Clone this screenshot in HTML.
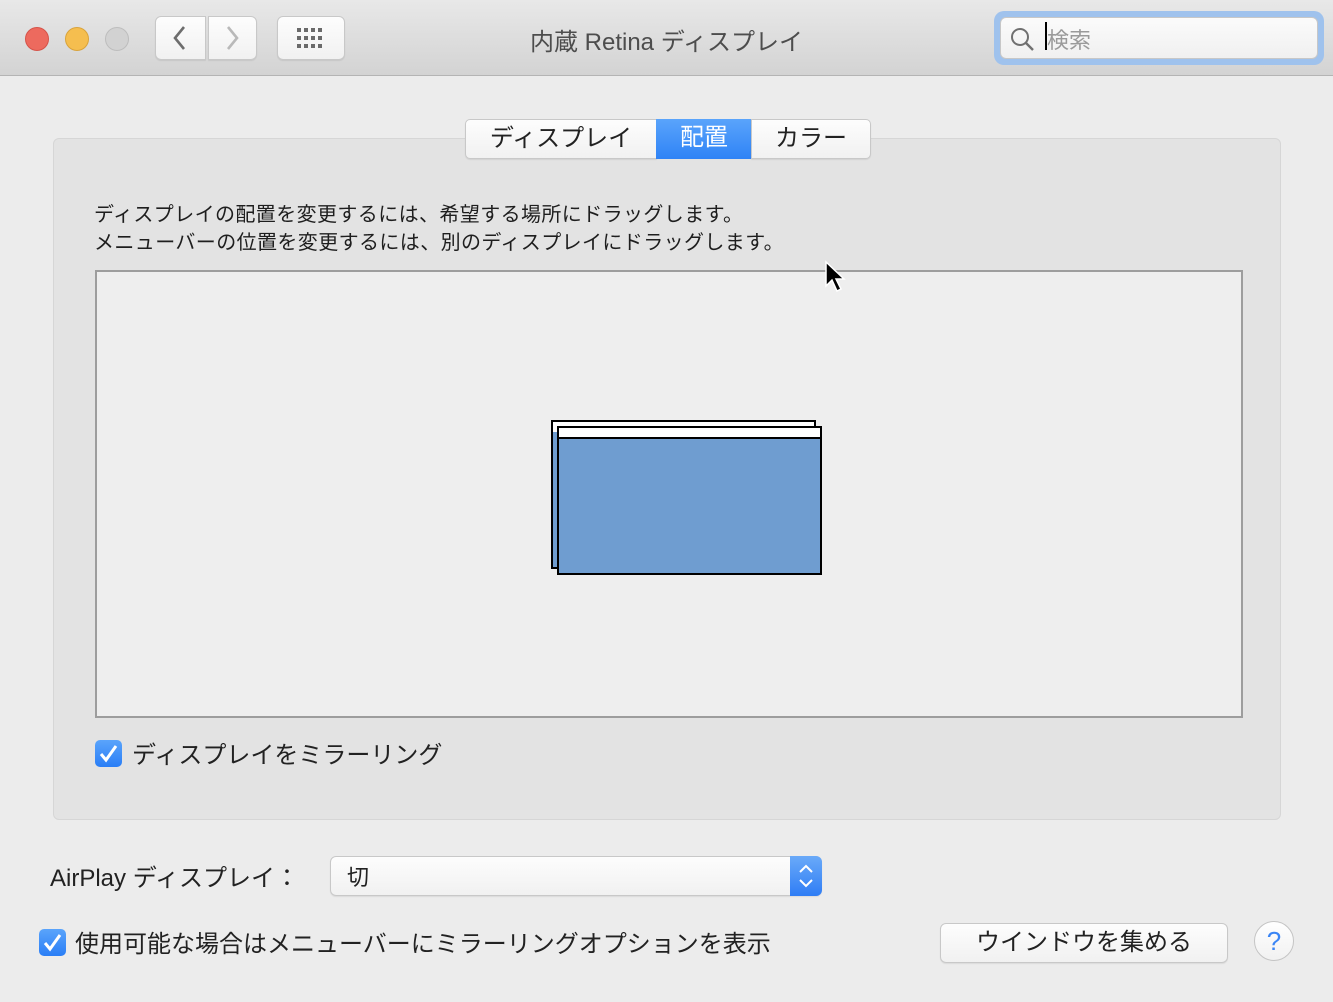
<!DOCTYPE html>
<html><head><meta charset="utf-8"><style>
*{box-sizing:border-box;margin:0;padding:0}
body{width:1333px;height:1002px;background:#ececec;font-family:"Liberation Sans","Noto Sans CJK JP",sans-serif;position:relative;overflow:hidden;color:#222}
.abs{position:absolute}
.tb{left:0;top:0;width:1333px;height:76px;background:linear-gradient(#e8e8e8,#d3d3d3);border-bottom:1px solid #b4b4b4}
.dot{width:24px;height:24px;border-radius:50%;top:27px}
.btn{background:linear-gradient(#fdfdfd,#f1f1f1);border:1px solid #c8c8c8;border-radius:6px;box-shadow:0 1px 1px rgba(0,0,0,.08)}
.box{left:53px;top:138px;width:1228px;height:682px;background:#e3e3e3;border:1px solid #d6d6d6;border-radius:6px}
.tab{top:119px;height:40px;font-size:24px;line-height:38px;text-align:center}
.chk{width:27px;height:27px;border-radius:5px;background:linear-gradient(#5aa4fb,#2a7ef6)}
</style></head><body>
<div class="abs tb"></div>
<div class="abs dot" style="left:25px;background:#ed6a5e;border:1px solid #d55349"></div>
<div class="abs dot" style="left:65px;background:#f5be4f;border:1px solid #d9a33b"></div>
<div class="abs dot" style="left:105px;background:#d2d2d2;border:1px solid #bdbdbd"></div>
<div class="abs btn" style="left:155px;top:16px;width:51px;height:44px;border-radius:6px 0 0 6px"></div>
<div class="abs btn" style="left:208px;top:16px;width:49px;height:44px;border-radius:0 6px 6px 0"></div>
<svg class="abs" style="left:155px;top:16px" width="102" height="44"><path d="M29 11 L20 22 L29 33" stroke="#6d6d6d" stroke-width="2.6" fill="none"/><path d="M73 11 L82 22 L73 33" stroke="#b9b9b9" stroke-width="2.6" fill="none"/></svg>
<div class="abs btn" style="left:277px;top:16px;width:68px;height:44px"></div>
<svg class="abs" style="left:277px;top:16px" width="68" height="44"><g fill="#6a6a6a"><rect x="20" y="12" width="4" height="4"/><rect x="27" y="12" width="4" height="4"/><rect x="34" y="12" width="4" height="4"/><rect x="41" y="12" width="4" height="4"/><rect x="20" y="20" width="4" height="4"/><rect x="27" y="20" width="4" height="4"/><rect x="34" y="20" width="4" height="4"/><rect x="41" y="20" width="4" height="4"/><rect x="20" y="28" width="4" height="4"/><rect x="27" y="28" width="4" height="4"/><rect x="34" y="28" width="4" height="4"/><rect x="41" y="28" width="4" height="4"/></g></svg>
<div class="abs" style="left:0;width:1333px;top:22px;text-align:center;font-size:24px;color:#4d4d4d">内蔵 Retina ディスプレイ</div>
<div class="abs" style="left:994px;top:11px;width:330px;height:54px;border-radius:10px;background:#9fc2ed"></div>
<div class="abs" style="left:1000px;top:17px;width:318px;height:42px;border-radius:6px;background:linear-gradient(#fbfbfb,#f0f0f0);border:1px solid #c7c7c7"></div>
<svg class="abs" style="left:1008px;top:25px" width="30" height="30"><circle cx="12" cy="12" r="8" stroke="#707070" stroke-width="2" fill="none"/><path d="M18 18 L25 25" stroke="#707070" stroke-width="2.4"/></svg>
<div class="abs" style="left:1045px;top:22px;width:2px;height:28px;background:#000"></div>
<div class="abs" style="left:1047px;top:23px;font-size:22px;color:#9a9a9a">検索</div>

<div class="abs box"></div>
<div class="abs btn tab" style="left:465px;width:192px;border-radius:5px 0 0 5px">ディスプレイ</div>
<div class="abs tab" style="left:656px;width:96px;background:linear-gradient(#5aa4fb,#2f83f6);color:#fff">配置</div>
<div class="abs btn tab" style="left:751px;width:120px;border-radius:0 5px 5px 0">カラー</div>
<div class="abs" style="left:94px;top:201px;font-size:20px;line-height:28px;letter-spacing:0.4px;color:#1e1e1e">ディスプレイの配置を変更するには、希望する場所にドラッグします。<br>メニューバーの位置を変更するには、別のディスプレイにドラッグします。</div>
<div class="abs" style="left:95px;top:270px;width:1148px;height:448px;background:#eeeeee;border:2px solid #9d9d9d"></div>
<div class="abs" style="left:551px;top:420px;width:265px;height:149px;background:#6f9dd0;border:2px solid #000"><div style="height:10px;background:#fff"></div></div>
<div class="abs" style="left:557px;top:426px;width:265px;height:149px;background:#6f9dd0;border:2px solid #000"><div style="height:11px;background:#fff;border-bottom:2px solid #000"></div></div>
<svg class="abs" style="left:824px;top:260px" width="24" height="36"><path d="M2 2 L2 26 L8 20 L13 31 L17 29 L12 19 L20 19 Z" fill="#000" stroke="#fff" stroke-width="1.5"/></svg>
<div class="abs chk" style="left:95px;top:740px"></div>
<svg class="abs" style="left:95px;top:740px" width="27" height="27"><path d="M6 14 L11 20 L21 6" stroke="#fff" stroke-width="3" fill="none"/></svg>
<div class="abs" style="left:132px;top:735px;font-size:24px">ディスプレイをミラーリング</div>

<div class="abs" style="left:50px;top:858px;font-size:24px">AirPlay ディスプレイ：</div>
<div class="abs btn" style="left:330px;top:856px;width:492px;height:40px"></div>
<div class="abs" style="left:790px;top:856px;width:32px;height:40px;border-radius:0 6px 6px 0;background:linear-gradient(#6aaaf8,#2f7df5)"></div>
<svg class="abs" style="left:790px;top:856px" width="32" height="40"><path d="M10 16 L16 10 L22 16 M10 24 L16 30 L22 24" stroke="#fff" stroke-width="2" fill="none"/></svg>
<div class="abs" style="left:347px;top:860px;font-size:22px">切</div>
<div class="abs chk" style="left:39px;top:929px"></div>
<svg class="abs" style="left:39px;top:929px" width="27" height="27"><path d="M6 14 L11 20 L21 6" stroke="#fff" stroke-width="3" fill="none"/></svg>
<div class="abs" style="left:75px;top:924px;font-size:24px">使用可能な場合はメニューバーにミラーリングオプションを表示</div>
<div class="abs btn" style="left:940px;top:923px;width:288px;height:40px;text-align:center;font-size:24px;line-height:37px">ウインドウを集める</div>
<div class="abs" style="left:1254px;top:921px;width:40px;height:40px;border-radius:50%;background:linear-gradient(#fff,#f1f1f1);border:1px solid #c4c4c4;text-align:center;font-size:26px;line-height:38px;color:#3a85f5">?</div>
</body></html>
